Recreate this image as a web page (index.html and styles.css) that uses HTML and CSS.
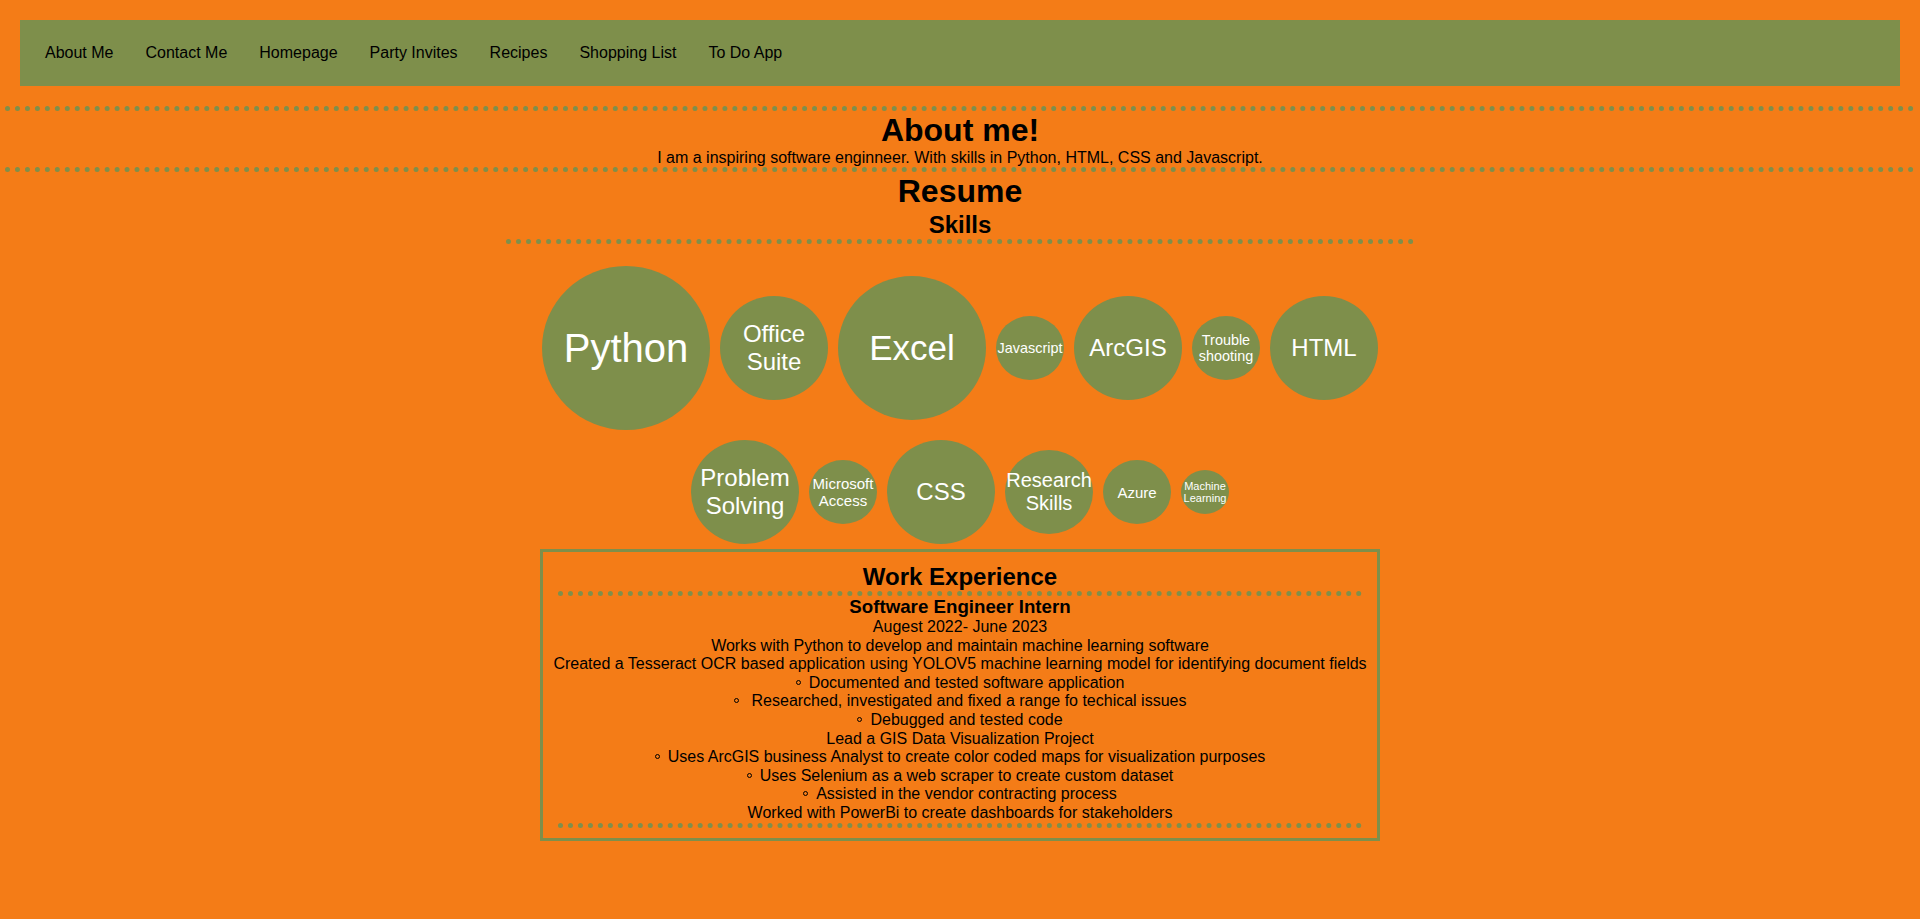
FILE: index.html
```html
<!DOCTYPE html>
<html lang="en">
<head>
<meta charset="utf-8">
<title>About Me</title>
<link rel="stylesheet" href="styles.css">
</head>
<body>
<nav class="topnav">
  <a href="#">About Me</a>
  <a href="#">Contact Me</a>
  <a href="#">Homepage</a>
  <a href="#">Party Invites</a>
  <a href="#">Recipes</a>
  <a href="#">Shopping List</a>
  <a href="#">To Do App</a>
</nav>
<div class="divider"></div>
<section class="about">
  <h1 class="title">About me!</h1>
  <p class="intro">I am a inspiring software enginneer. With skills in Python, HTML, CSS and Javascript.</p>
</section>
<div class="divider"></div>
<section class="resume">
  <h1 class="title">Resume</h1>
  <h2 class="skills-title">Skills</h2>
  <div class="skills">
    <div class="bubble b168 f40">Python</div>
    <div class="bubble b108 f24">Office Suite</div>
    <div class="bubble b148 f35">Excel</div>
    <div class="bubble b68 f14">Javascript</div>
    <div class="bubble b108 f24">ArcGIS</div>
    <div class="bubble b68 f14">Trouble shooting</div>
    <div class="bubble b108 f24">HTML</div>
    <div class="bubble b108 f24">Problem Solving</div>
    <div class="bubble b68 f15">Microsoft Access</div>
    <div class="bubble b108 f24">CSS</div>
    <div class="bubble b88 f20">Research Skills</div>
    <div class="bubble b68 f15">Azure</div>
    <div class="bubble b48 f11">Machine Learning</div>
  </div>
  <div class="work">
    <h2 class="work-title">Work Experience</h2>
    <div class="work-body">
      <h3 class="job">Software Engineer Intern</h3>
      <p class="line">Augest 2022- June 2023</p>
      <p class="line">Works with Python to develop and maintain machine learning software</p>
      <p class="line">Created a Tesseract OCR based application using YOLOV5 machine learning model for identifying document fields</p>
      <ul class="bullets">
        <li>Documented and tested software application</li>
        <li class="spaced">Researched, investigated and fixed a range fo techical issues</li>
        <li>Debugged and tested code</li>
      </ul>
      <p class="line">Lead a GIS Data Visualization Project</p>
      <ul class="bullets">
        <li>Uses ArcGIS business Analyst to create color coded maps for visualization purposes</li>
        <li>Uses Selenium as a web scraper to create custom dataset</li>
        <li>Assisted in the vendor contracting process</li>
      </ul>
      <p class="line">Worked with PowerBi to create dashboards for stakeholders</p>
    </div>
    <div class="work-end"></div>
  </div>
</section>
</body>
</html>
```

FILE: styles.css
```css
html, body {
  margin: 0;
  padding: 0;
}

body {
  background: #f47c17;
  font-family: "Liberation Sans", Arial, sans-serif;
  font-size: 16px;
  color: #000;
  min-height: 919px;
  padding-top: 20px;
  box-sizing: border-box;
}

.topnav {
  display: flex;
  align-items: center;
  margin: 0 20px;
  height: 66px;
  padding-left: 9px;
  background: #7e8f4b;
}

.topnav a {
  padding: 0 16px;
  color: #000;
  text-decoration: none;
  font-size: 16px;
}

.divider {
  margin: 20px 5px 0;
  border-top: 5px dotted #7e8f4b;
}

.about + .divider {
  margin-top: 0;
}

.about,
.resume {
  text-align: center;
}

.title {
  margin: 0;
  padding-top: 1px;
  font-size: 32px;
  font-weight: bold;
}

.intro {
  margin: 0;
}

.skills-title {
  margin: 1px auto 0;
  width: 908px;
  font-size: 24px;
  border-bottom: 5px dotted #7e8f4b;
}

.skills {
  width: 908px;
  margin: 0 auto;
  padding-top: 17px;
  display: flex;
  flex-wrap: wrap;
  justify-content: center;
  align-items: center;
}

.bubble {
  margin: 5px;
  border-radius: 50%;
  background: #7e8f4b;
  color: #fff;
  display: flex;
  align-items: center;
  justify-content: center;
  text-align: center;
  box-sizing: border-box;
}

.b168 { width: 168px; height: 164px; }
.b148 { width: 148px; height: 144px; }
.b108 { width: 108px; height: 104px; }
.b88  { width: 88px;  height: 84px; }
.b68  { width: 68px;  height: 64px; }
.b48  { width: 48px;  height: 44px; }

.f40 { font-size: 40px; }
.f35 { font-size: 35px; }
.f24 { font-size: 24px; }
.f20 { font-size: 20px; }
.f15 { font-size: 15px; }
.f14 { font-size: 14.4px; }
.f11 { font-size: 11px; }

.work {
  width: 840px;
  margin: 0 auto;
  box-sizing: border-box;
  border: 3px solid #7e8f4b;
  padding: 11px 3px 10px;
}

.work-title {
  margin: 0 12px;
  font-size: 24px;
  border-bottom: 5px dotted #7e8f4b;
}

.work-end {
  margin: 0 12px;
  border-top: 5px dotted #7e8f4b;
}

.job {
  margin: 0;
  font-size: 18.72px;
}

.line {
  margin: 0;
  line-height: 18.6px;
}

.bullets {
  margin: 0;
  padding: 0;
  list-style: none;
  line-height: 18.6px;
}

.bullets li::before {
  content: "";
  display: inline-block;
  width: 3px;
  height: 3px;
  border: 1px solid #000;
  border-radius: 50%;
  margin-right: 8px;
  vertical-align: 3px;
}

.bullets li.spaced::before {
  margin-right: 13px;
}
```
